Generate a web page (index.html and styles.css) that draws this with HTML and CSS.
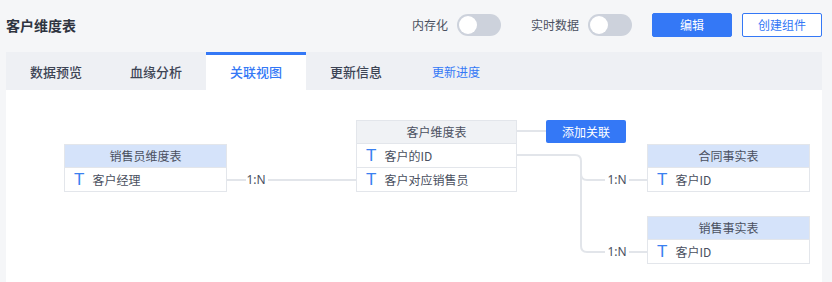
FILE: index.html
```html
<!DOCTYPE html>
<html lang="zh-CN">
<head>
  <meta charset="UTF-8">
  <title>客户维度表</title>
  <link rel="stylesheet" href="styles.css">
</head>
<body>
  <!-- Top bar -->
  <div class="topbar">
    <div class="page-title">客户维度表</div>
    <div class="actions">
      <label class="switch-item">内存化 <span class="switch"><span class="knob"></span></span></label>
      <label class="switch-item">实时数据 <span class="switch"><span class="knob"></span></span></label>
      <button class="btn btn-primary">编辑</button>
      <button class="btn btn-outline">创建组件</button>
    </div>
  </div>

  <!-- Tabs -->
  <div class="tabs">
    <div class="tab">数据预览</div>
    <div class="tab">血缘分析</div>
    <div class="tab active">关联视图</div>
    <div class="tab">更新信息</div>
    <div class="tab link">更新进度</div>
  </div>

  <!-- Relation diagram -->
  <div class="canvas">
    <svg class="links" width="816" height="192">
      <g class="line">
        <path d="M219 90 H240 M262 90 H350"></path>
        <path d="M509 41 H540"></path>
        <path d="M509 65 H569 Q575 65 575 71 V84 Q575 90 581 90 H599 M623 90 H641"></path>
        <path d="M575 84 V156 Q575 162 581 162 H599 M623 162 H641"></path>
      </g>
      <text x="250" y="94">1:N</text>
      <text x="611" y="94">1:N</text>
      <text x="611" y="166">1:N</text>
    </svg>

    <div class="node blue" style="left: 58px; top: 54px; width: 161px;">
      <div class="node-head">销售员维度表</div>
      <div class="field"><span class="t">T</span>客户经理</div>
    </div>

    <div class="node grey" style="left: 350px; top: 30px; width: 159px;">
      <div class="node-head">客户维度表</div>
      <div class="field"><span class="t">T</span>客户的ID</div>
      <div class="field"><span class="t">T</span>客户对应销售员</div>
    </div>

    <button class="add-link">添加关联</button>

    <div class="node blue" style="left: 641px; top: 54px; width: 161px;">
      <div class="node-head">合同事实表</div>
      <div class="field"><span class="t">T</span>客户ID</div>
    </div>

    <div class="node blue" style="left: 641px; top: 126px; width: 161px;">
      <div class="node-head">销售事实表</div>
      <div class="field"><span class="t">T</span>客户ID</div>
    </div>
  </div>
</body>
</html>
```

FILE: styles.css
```css
/* General */
body {
  margin: 0;
  padding: 0 10px 0 6px;
  background: #f5f6f8;
  font-family: "Noto Sans CJK SC", "Noto Sans", sans-serif;
  font-size: 12px;
  color: #4a5060;
}

/* Top bar */
.topbar {
  height: 52px;
  display: flex;
  align-items: center;
  justify-content: space-between;
}

.page-title {
  font-size: 14px;
  font-weight: 700;
  color: #2f3440;
  margin-top: -2px;
}

.actions {
  display: flex;
  align-items: center;
  margin-top: -3px;
}

.switch-item {
  display: flex;
  align-items: center;
  gap: 9px;
  margin-right: 30px;
  color: #4a5060;
}

.switch-item + .switch-item {
  margin-right: 20px;
}

.switch {
  position: relative;
  width: 44px;
  height: 22px;
  border-radius: 11px;
  background: #cdd2dc;
}

.knob {
  position: absolute;
  left: 2px;
  top: 2px;
  width: 18px;
  height: 18px;
  border-radius: 50%;
  background: #fff;
}

.btn {
  width: 80px;
  height: 24px;
  border-radius: 2px;
  font-family: inherit;
  font-size: 12px;
  padding: 0;
  cursor: pointer;
}

.btn-primary {
  background: #3478f6;
  border: 1px solid #3478f6;
  color: #fff;
  margin-right: 10px;
}

.btn-outline {
  background: #fff;
  border: 1px solid #3478f6;
  color: #3478f6;
}

/* Tabs */
.tabs {
  display: flex;
  height: 38px;
  background: #eef0f4;
}

.tab {
  width: 100px;
  display: flex;
  align-items: center;
  justify-content: center;
  font-size: 13px;
  font-weight: 500;
  color: #3d4454;
  box-sizing: border-box;
}

.tab.active {
  background: #fff;
  border-top: 3px solid #3478f6;
  color: #3478f6;
  padding-bottom: 3px;
}

.tab.link {
  color: #3478f6;
  font-weight: 400;
  font-size: 12px;
}

/* Diagram canvas */
.canvas {
  position: relative;
  height: 192px;
  background: #fff;
}

.links {
  position: absolute;
  left: 0;
  top: 0;
}

.line path {
  fill: none;
  stroke: #e2e5ea;
  stroke-width: 2;
}

.links text {
  font-family: "Noto Sans", sans-serif;
  font-size: 12px;
  fill: #4a5060;
  text-anchor: middle;
}

.node {
  position: absolute;
  background: #fff;
  border: 1px solid #e3e6eb;
}

.node-head {
  height: 22px;
  line-height: 22px;
  text-align: center;
  border-bottom: 1px solid #e3e6eb;
}

.node.blue .node-head {
  background: #d5e3fa;
}

.node.grey .node-head {
  background: #f0f2f5;
}

.field {
  height: 23px;
  display: flex;
  align-items: center;
  padding-left: 9px;
  border-bottom: 1px solid #e3e6eb;
}

.field:last-child {
  border-bottom: none;
}

.t {
  font-family: "Liberation Sans", sans-serif;
  font-size: 17px;
  color: #3a80f0;
  margin-right: 8px;
}

.add-link {
  position: absolute;
  left: 540px;
  top: 30px;
  width: 80px;
  height: 23px;
  border: none;
  border-radius: 2px;
  background: #3478f6;
  color: #fff;
  font-family: inherit;
  font-size: 12px;
  padding: 0;
}
```
